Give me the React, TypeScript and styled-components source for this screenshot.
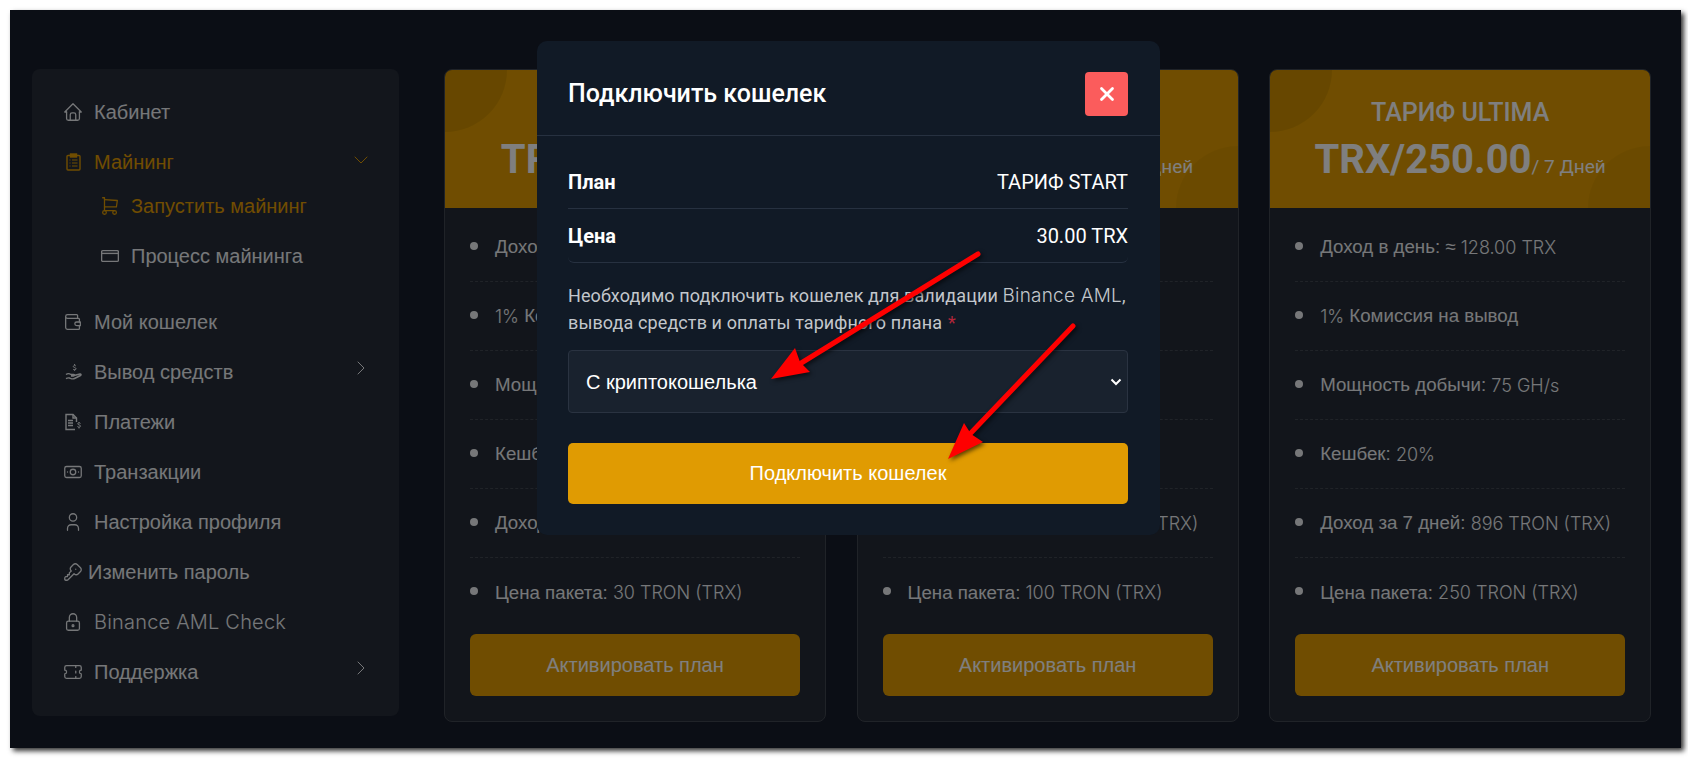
import React from "react";
import styled, { createGlobalStyle } from "styled-components";
import {
  TbHome,
  TbShoppingCart,
  TbWallet,
  TbCashBanknote,
  TbUser,
  TbKey,
  TbLock,
  TbTicket,
  TbChevronDown,
  TbChevronRight,
  TbX,
} from "react-icons/tb";

const GlobalStyle = createGlobalStyle`
  html, body {
    margin: 0;
    background: #fff;
    overflow: hidden;
  }
  * { box-sizing: border-box; }
`;

const sans = `"Liberation Sans", Arial, sans-serif`;
const roboto = `Roboto, "Liberation Sans", sans-serif`;

type Plan = { name: string; price: string; rows: React.ReactNode[] };

function ClipboardIcon() {
  return <svg width="15" height="18" viewBox="0 0 15 18" fill="none" stroke="currentColor" strokeWidth="1.4">
    <rect x="1" y="2.500" width="13" height="14.500" rx="1" />
    <rect x="4.500" y="1" width="6" height="3" fill="currentColor" />
    <path d="M3.500 7h1M6 7h5.500M3.500 10h1M6 10h5.500M3.500 13h1M6 13h5.500" strokeWidth="1.200" />
  </svg>;
}

function CardIcon() {
  return <svg width="18" height="14" viewBox="0 0 18 14" fill="none" stroke="currentColor" strokeWidth="1.2">
    <rect x="0.6" y="1.6" width="16.8" height="10.8" rx="1.2" />
    <path d="M1 4.400h16" />
  </svg>;
}

function HandCoinIcon() {
  return <svg width="17" height="18" viewBox="0 0 17 18" fill="none" stroke="currentColor" strokeWidth="1.2">
    <path d="M9.600 1v1M11 3.200C10.600 2.400 8.400 2.200 8.300 3.500c-.1 1.300 2.800.9 2.800 2.300 0 1.200-2.300 1.300-3 .4M9.600 6.800v1" strokeWidth="1" />
    <path d="M1 11.500c2-1.500 3.500-1 5 0h2.500c1 0 1 1.500 0 1.500H6M9 12.500l6-1.500c1-.2 1.500 1 .5 1.500L9.500 15.500c-2 1-3.500 0-5-.5-1-.3-2.500 0-3.500.6" />
  </svg>;
}

function BillIcon() {
  return <svg width="18" height="18" viewBox="0 0 18 18" fill="none" stroke="currentColor" strokeWidth="1.200">
    <path d="M11 16.500H2V1.500h7l3.500 3.500v4" />
    <path d="M9 1.500V5h3.500" />
    <path d="M4 7.500h5M4 10h5M4 12.500h5" />
    <path d="M16.500 10.500c-.4-.8-2.700-1-2.800.3-.1 1.300 2.900.9 2.900 2.300 0 1.200-2.500 1.300-3.200.4M15 9v1M15 14v1.500" strokeWidth="1" />
  </svg>;
}

const navTop = [
  { label: "Кабинет", icon: <TbHome /> },
  { label: "Майнинг", icon: <ClipboardIcon />, active: true, arrow: "down" },
];
const navSub = [
  { label: "Запустить майнинг", icon: <TbShoppingCart />, active: true },
  { label: "Процесс майнинга", icon: <CardIcon /> },
];
const navBottom = [
  { label: "Мой кошелек", icon: <TbWallet /> },
  { label: "Вывод средств", icon: <HandCoinIcon />, arrow: "right" },
  { label: "Платежи", icon: <BillIcon /> },
  { label: "Транзакции", icon: <TbCashBanknote /> },
  { label: "Настройка профиля", icon: <TbUser /> },
  { label: "Изменить пароль", icon: <TbKey />, tight: true },
  { label: "Binance AML Check", icon: <TbLock />, latin: true },
  { label: "Поддержка", icon: <TbTicket />, arrow: "right" },
];

const plans: Plan[] = [
  {
    name: "ТАРИФ START",
    price: "TRX/30.00",
    rows: [
      <>Доход в день: ≈ <Lat>15.36 TRX</Lat></>,
      <><Lat>1%</Lat> Комиссия на вывод</>,
      <>Мощность добычи: <Lat>9 GH/s</Lat></>,
      <>Кешбек: <Lat>20%</Lat></>,
      <>Доход за 7 дней: <Lat>107 TRON (TRX)</Lat></>,
      <>Цена пакета: <Lat>30 TRON (TRX)</Lat></>,
    ],
  },
  {
    name: "ТАРИФ PRO",
    price: "TRX/100.00",
    rows: [
      <>Доход в день: ≈ <Lat>51.20 TRX</Lat></>,
      <><Lat>1%</Lat> Комиссия на вывод</>,
      <>Мощность добычи: <Lat>30 GH/s</Lat></>,
      <>Кешбек: <Lat>20%</Lat></>,
      <>Доход за 7 дней: <Lat>358 TRON (TRX)</Lat></>,
      <>Цена пакета: <Lat>100 TRON (TRX)</Lat></>,
    ],
  },
  {
    name: "ТАРИФ ULTIMA",
    price: "TRX/250.00",
    rows: [
      <>Доход в день: ≈ <Lat>128.00 TRX</Lat></>,
      <><Lat>1%</Lat> Комиссия на вывод</>,
      <>Мощность добычи: <Lat>75 GH/s</Lat></>,
      <>Кешбек: <Lat>20%</Lat></>,
      <>Доход за 7 дней: <Lat>896 TRON (TRX)</Lat></>,
      <>Цена пакета: <Lat>250 TRON (TRX)</Lat></>,
    ],
  },
];

function NavRow(props: { item: any; sub?: boolean }) {
  const { item, sub } = props;
  return <NavItem $active={item.active} $sub={sub}>
    <NavIcon $tight={item.tight}>{item.icon}</NavIcon>
    {item.latin ? <LatinLabel>{item.label}</LatinLabel> : <span>{item.label}</span>}
    {item.arrow === "down" && <NavArrow $down><TbChevronDown /></NavArrow>}
    {item.arrow === "right" && <NavArrow><TbChevronRight /></NavArrow>}
  </NavItem>;
}

export default function App() {
  return <Page>
    <GlobalStyle />
    <Panel>
      <Sidebar>
        {navTop.map(i => <NavRow key={i.label} item={i} />)}
        <SubMenu>
          {navSub.map(i => <NavRow key={i.label} item={i} sub />)}
        </SubMenu>
        {navBottom.map(i => <NavRow key={i.label} item={i} />)}
      </Sidebar>
      <Cards>
        {plans.map(p => <Card key={p.name}>
          <CardHead>
            <PlanName>{p.name}</PlanName>
            <PriceLine><Price>{p.price}</Price><Period>/ 7 Дней</Period></PriceLine>
          </CardHead>
          <CardBody>
            <Rows>
              {p.rows.map((r, i) => <Row key={i}>{r}</Row>)}
            </Rows>
            <ActivateButton>Активировать план</ActivateButton>
          </CardBody>
        </Card>)}
      </Cards>
      <Backdrop>
        <Modal>
          <ModalHead>
            <ModalTitle>Подключить кошелек</ModalTitle>
            <CloseButton><TbX /></CloseButton>
          </ModalHead>
          <ModalBody>
            <InfoRow><b>План</b><span>ТАРИФ START</span></InfoRow>
            <InfoRow $rounded><b>Цена</b><span>30.00 TRX</span></InfoRow>
            <Note>Необходимо подключить кошелек для валидации <NoteLat>Binance AML</NoteLat>, вывода средств и оплаты тарифного плана<Star>*</Star></Note>
            <SelectWrap>
              <WalletSelect defaultValue="crypto">
                <option value="crypto">С криптокошелька</option>
              </WalletSelect>
              <SelectArrow viewBox="0 0 12 8"><path d="M1.500 1.500 6 6l4.500-4.500" /></SelectArrow>
            </SelectWrap>
            <ConnectButton>Подключить кошелек</ConnectButton>
          </ModalBody>
        </Modal>
      </Backdrop>
    </Panel>
    <Arrows viewBox="0 0 1688 758">
      <path d="M978 254 798 365" />
      <polygon points="771,379 795,348 800,362 810,372" />
      <path d="M1073 326 968 436" />
      <polygon points="948,459 964,423 971,434 983,442" />
    </Arrows>
  </Page>;
}

const Page = styled.div`
  position: relative;
  width: 1688px;
  height: 758px;
  padding: 10px 7px 10px 10px;
`;

const Panel = styled.div`
  position: relative;
  height: 738px;
  background: #161c2a;
  padding: 59px 30px 0 22px;
  display: flex;
  align-items: flex-start;
  gap: 45px;
  box-shadow: 3px 3px 5px rgba(0, 0, 0, 0.8);
`;

const Sidebar = styled.nav`
  flex: 0 0 367px;
  height: 647px;
  padding: 18px 0 19px 32px;
  background: #262c38;
  border-radius: 8px;
  font-family: ${sans};
`;

const SubMenu = styled.div`
  margin: -6px 0 16px;
`;

const NavItem = styled.div<{ $active?: boolean; $sub?: boolean }>`
  position: relative;
  display: flex;
  align-items: center;
  height: 50px;
  font-size: 20px;
  padding-left: ${p => (p.$sub ? "37px" : "0")};
  color: ${p => (p.$active ? "#e09b02" : "#eceff2")};
`;

const NavIcon = styled.span<{ $tight?: boolean }>`
  display: flex;
  flex: 0 0 18px;
  width: 18px;
  min-width: 0;
  justify-content: center;
  align-items: center;
  margin-right: ${p => (p.$tight ? "6px" : "12px")};
  font-size: 22px;
  svg { stroke-width: 1.4; flex-shrink: 0; }
`;

const LatinLabel = styled.span`
  font-family: Inter, sans-serif;
  font-weight: 300;
  letter-spacing: 0.2px;
`;

const NavArrow = styled.span<{ $down?: boolean }>`
  position: absolute;
  left: 285px;
  top: ${p => (p.$down ? "11px" : "9px")};
  font-size: 24px;
  display: flex;
  svg { stroke-width: 1; }
`;

const Cards = styled.div`
  display: grid;
  grid-template-columns: repeat(3, 382px);
  gap: 30.6px;
`;

const Card = styled.div`
  height: 653px;
  background: #242a36;
  border: 1px solid #414650;
  border-radius: 8px;
  overflow: hidden;
`;

const CardHead = styled.div`
  position: relative;
  height: 138px;
  background: #e09b02;
  text-align: center;
  padding-top: 28px;
  font-family: ${roboto};
  color: #fff;
  overflow: hidden;

  &::before, &::after {
    content: "";
    position: absolute;
    width: 124px;
    height: 124px;
    border-radius: 50%;
    background: rgba(0, 0, 0, 0.08);
  }
  &::before { top: -62px; left: -62px; }
  &::after { bottom: -62px; right: -62px; background: rgba(0, 0, 0, 0.04); }
`;

const PlanName = styled.div`
  font-size: 25px;
  font-weight: 500;
  line-height: 30px;
  position: relative;
`;

const PriceLine = styled.div`
  position: relative;
  margin-top: 4px;
  line-height: 56px;
`;

const Price = styled.span`
  font-size: 40px;
  font-weight: 700;
`;

const Period = styled.span`
  font-size: 19px;
`;

const CardBody = styled.div`
  padding: 5px 25px 0;
`;

const Rows = styled.ul`
  list-style: none;
  margin: 0;
  padding: 0;
  font-family: ${sans};
  font-size: 18.7px;
  color: #eceff2;
`;

const Row = styled.li`
  position: relative;
  height: 69px;
  padding: 0 0 0 25px;
  display: flex;
  align-items: center;
  white-space: pre;
  border-bottom: 1px dashed #414650;

  &:last-child { border-bottom: none; }

  &::before {
    content: "";
    position: absolute;
    left: 0;
    top: 29px;
    width: 8px;
    height: 8px;
    border-radius: 50%;
    background: #eceff2;
  }
`;

function Lat(props: { children: React.ReactNode }) {
  return <LatSpan>{props.children}</LatSpan>;
}

const LatSpan = styled.span`
  font-family: Inter, sans-serif;
  font-weight: 300;
  font-size: 18px;
`;

const ActivateButton = styled.button`
  display: block;
  width: 100%;
  height: 62px;
  margin-top: 7px;
  border: none;
  border-radius: 6px;
  background: #e09b02;
  color: #fff;
  font-family: ${sans};
  font-size: 20px;
`;

const Backdrop = styled.div`
  position: absolute;
  inset: 0;
  background: rgba(0, 0, 0, 0.5);
  padding: 31px 0 0 527px;
`;

const Modal = styled.div`
  width: 623px;
  height: 494px;
  background: #111a26;
  border-radius: 10px;
  font-family: ${roboto};
  color: #fff;
`;

const ModalHead = styled.div`
  height: 95px;
  padding: 11px 32px 0 31px;
  display: flex;
  align-items: center;
  justify-content: space-between;
  border-bottom: 1px solid #273140;
`;

const ModalTitle = styled.div`
  font-size: 25px;
  font-weight: 500;
`;

const CloseButton = styled.div`
  width: 43px;
  height: 44px;
  border-radius: 4px;
  background: #fb5c5c;
  display: flex;
  align-items: center;
  justify-content: center;
  font-size: 22px;
  svg { stroke-width: 3; }
`;

const ModalBody = styled.div`
  padding: 19px 32px 0 31px;
`;

const InfoRow = styled.div<{ $rounded?: boolean }>`
  height: 54px;
  display: flex;
  align-items: center;
  justify-content: space-between;
  font-size: 20px;
  border-bottom: 1px solid #273140;
  border-radius: ${p => (p.$rounded ? "0 0 6px 6px" : "0")};
  b { font-weight: 700; }
`;

const Note = styled.div`
  margin-top: 19px;
  font-size: 18px;
  letter-spacing: 0.1px;
  line-height: 27px;
  color: #c3c7cc;
`;

const NoteLat = styled.span`
  font-family: Inter, sans-serif;
  font-weight: 300;
  font-size: 19px;
  letter-spacing: 0.2px;
`;

const Star = styled.span`
  color: #b3263a;
  margin-left: 6px;
`;

const SelectWrap = styled.div`
  position: relative;
  margin-top: 14px;
`;

const WalletSelect = styled.select`
  display: block;
  width: 100%;
  height: 63px;
  padding: 0 17px;
  appearance: none;
  background: #19222e;
  border: 1px solid #2a3341;
  border-radius: 4px;
  color: #fff;
  font-family: ${sans};
  font-size: 20px;
  outline: none;
`;

const SelectArrow = styled.svg`
  position: absolute;
  right: 6px;
  top: 28px;
  width: 12px;
  height: 8px;
  fill: none;
  stroke: #fff;
  stroke-width: 2;
`;

const ConnectButton = styled.button`
  display: block;
  width: 100%;
  height: 61px;
  margin-top: 30px;
  border: none;
  border-radius: 5px;
  background: #e09b02;
  color: #fff;
  font-family: ${sans};
  font-size: 20px;
`;

const Arrows = styled.svg`
  position: absolute;
  left: 0;
  top: 0;
  width: 1688px;
  height: 758px;
  pointer-events: none;
  filter: drop-shadow(2px 2px 2px rgba(0, 0, 0, 0.6));

  path { fill: none; stroke: #fe0000; stroke-width: 5; stroke-linecap: round; }
  polygon { fill: #fe0000; }
`;
